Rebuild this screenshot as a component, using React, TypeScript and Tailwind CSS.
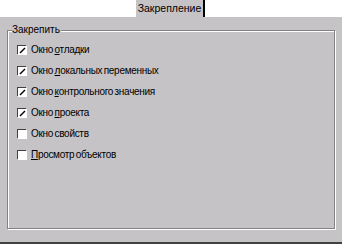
import React from 'react';

const items = [
  { label: 'Окно отладки', checked: true, key: 5 },
  { label: 'Окно локальных переменных', checked: true, key: 5 },
  { label: 'Окно контрольного значения', checked: true, key: 5 },
  { label: 'Окно проекта', checked: true, key: 5 },
  { label: 'Окно свойств', checked: false, key: -1 },
  { label: 'Просмотр объектов', checked: false, key: 0 },
];

function CheckBox({ checked }: { checked: boolean }) {
  return (
    <div className="w-[9px] h-[9px] bg-white border-t border-l border-[#424142] shadow-[1px_1px_0_#fff] flex items-center justify-center shrink-0">
      {checked && (
        <svg width="7" height="7" viewBox="0 0 7 7">
          <path d="M1 6 L6 1" stroke="#000" strokeWidth="1.4" />
          <path d="M1 5 L2 6" stroke="#000" strokeWidth="1" />
        </svg>
      )}
    </div>
  );
}

function Label({ text, k }: { text: string; k: number }) {
  if (k < 0) return <span>{text}</span>;
  return (
    <span>
      {text.slice(0, k)}
      <span className="underline underline-offset-1">{text[k]}</span>
      {text.slice(k + 1)}
    </span>
  );
}

export default function App() {
  return (
    <div className="w-[342px] h-[244px] bg-white flex flex-col overflow-hidden" style={{ fontFamily: '"Liberation Sans", Arial, sans-serif' }}>
      <div className="h-[17px] shrink-0 flex">
        <div className="ml-[136px] w-[69px] h-full bg-[#c6c3c6] border-r-2 border-[#000] flex items-center justify-center text-[10.5px] text-black pt-[1px]">
          Закрепление
        </div>
      </div>
      <div className="flex-1 bg-[#c6c3c6] border-b-2 border-[#424142] pt-[13px] pl-[7px]">
        <div className="relative w-[328px] h-[199px] border border-[#848284] shadow-[inset_1px_1px_0_#fff,1px_1px_0_#fff]">
          <div className="absolute left-[4px] top-[-7px] bg-[#c6c3c6] pr-[1px] text-[10px] leading-[12px] text-black">
            Закрепить
          </div>
          <div className="pt-[8px] pl-[9px] flex flex-col">
            {items.map((it) => (
              <div key={it.label} className="h-[21px] flex items-center gap-[5px] text-[10px] text-black tracking-[-0.3px] [word-spacing:-1px]">
                <CheckBox checked={it.checked} />
                <Label text={it.label} k={it.key} />
              </div>
            ))}
          </div>
        </div>
      </div>
    </div>
  );
}
